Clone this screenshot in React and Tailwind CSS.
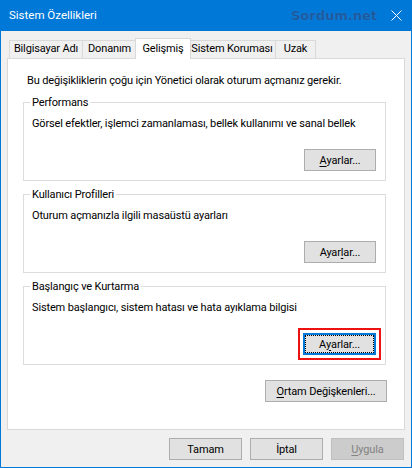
import React from 'react';

const tabs = [
  { label: 'Bilgisayar Adı', w: 'w-[74px]' },
  { label: 'Donanım', w: 'w-[55px]' },
  { label: 'Gelişmiş', w: 'w-[56px]', active: true },
  { label: 'Sistem Koruması', w: 'w-[88px]' },
  { label: 'Uzak', w: 'w-[41px]' },
];

// Mnemonic letter, underlined like a Win32 accelerator
const Key = ({ children }) => <span className="underline underline-offset-[2px]">{children}</span>;

const WinButton = ({ children, className = '', focused = false, disabled = false }) => (
  <button
    type="button"
    className={`flex items-center justify-center h-[22px] leading-none whitespace-nowrap ${
      disabled
        ? 'bg-[#cccccc] border border-[#bfbfbf] text-[#838383]'
        : focused
          ? 'bg-[#e1e1e1] border-2 border-[#0078d7] text-black'
          : 'bg-[#e1e1e1] border border-[#adadad] text-black'
    } ${className}`}
  >
    {focused ? (
      <span className="flex items-center justify-center w-full h-full border border-dotted border-black">
        {children}
      </span>
    ) : (
      children
    )}
  </button>
);

const GroupBox = ({ title, text, children }) => (
  <fieldset className="border border-[#dcdcdc] pl-[6px] pr-[10px] pb-[9px]">
    <legend className="px-[2px] h-[15px] leading-[15px]">{title}</legend>
    <p className="ml-[2px] mt-[6px] h-[15px] leading-[15px]">{text}</p>
    <div className="flex justify-end mt-[18px]">{children}</div>
  </fieldset>
);

export default function App() {
  return (
    <div
      className="w-[412px] h-[468px] flex flex-col border-x border-b border-[#0078d7] bg-[#f0f0f0] text-[11px] tracking-[-0.15px] text-black whitespace-nowrap"
      style={{ fontFamily: 'Roboto, "Liberation Sans", Arial, sans-serif' }}
    >
      {/* title bar */}
      <div className="h-[31px] shrink-0 -mx-px flex items-center bg-[#0078d7] pl-[9px] pr-[10px]">
        <span className="text-white text-[11.5px] tracking-normal">Sistem Özellikleri</span>
        <span
          className="ml-auto mr-[14px] text-[13px] tracking-normal font-bold text-[#1a5a9e] [text-shadow:0_0_1px_#3a8ae0]"
          style={{ fontFamily: '"DejaVu Sans", Verdana, sans-serif' }}
        >
          Sordum.net
        </span>
        <svg width="11" height="11" viewBox="0 0 11 11">
          <path d="M0.5 0.5 L10.5 10.5 M10.5 0.5 L0.5 10.5" stroke="#ffffff" strokeWidth="1" />
        </svg>
      </div>

      <div className="flex-1 flex flex-col pl-[6px] pr-[6px] pt-[7px]">
        {/* tab strip */}
        <div className="flex items-end h-[20px] pl-[2px] relative z-10">
          {tabs.map((t) =>
            t.active ? (
              <div
                key={t.label}
                className={`${t.w} -ml-[2px] -mr-[2px] h-[21px] -mb-px border border-b-0 border-[#d9d9d9] bg-white flex items-start justify-center pt-[2px] relative z-10`}
              >
                {t.label}
              </div>
            ) : (
              <div
                key={t.label}
                className={`${t.w} -ml-px first:ml-0 h-[18px] border border-b-0 border-[#d9d9d9] bg-[#f0f0f0] flex items-center justify-center`}
              >
                {t.label}
              </div>
            )
          )}
        </div>

        {/* tab page */}
        <div className="h-[372px] border border-[#d9d9d9] bg-white pl-[15px] pr-[18px] pt-[14px]">
          <p className="ml-[4px] h-[15px] leading-[15px]">
            Bu değişikliklerin çoğu için Yönetici olarak oturum açmanız gerekir.
          </p>

          <div className="flex flex-col gap-[6px] mt-[7px]">
            <GroupBox title="Performans" text="Görsel efektler, işlemci zamanlaması, bellek kullanımı ve sanal bellek">
              <WinButton className="w-[72px] -mr-px">
                <Key>A</Key>yarlar...
              </WinButton>
            </GroupBox>

            <GroupBox title="Kullanıcı Profilleri" text="Oturum açmanızla ilgili masaüstü ayarları">
              <WinButton className="w-[72px] -mr-px">
                Ayar<Key>l</Key>ar...
              </WinButton>
            </GroupBox>

            <GroupBox title="Başlangıç ve Kurtarma" text="Sistem başlangıcı, sistem hatası ve hata ayıklama bilgisi">
              <WinButton focused className="w-[73px] -mr-px outline-2 outline-[#ee1111] outline-offset-[3px]">
                A<Key>y</Key>arlar...
              </WinButton>
            </GroupBox>
          </div>

          <div className="flex justify-end mt-[15px]">
            <WinButton className="w-[122px] -mr-px">
              <Key>O</Key>rtam Değişkenleri...
            </WinButton>
          </div>
        </div>

        {/* dialog buttons */}
        <div className="flex justify-end gap-[8px] mt-[8px] pr-px">
          <WinButton className="w-[73px]">Tamam</WinButton>
          <WinButton className="w-[73px]">İptal</WinButton>
          <WinButton disabled className="w-[73px]">
            <Key>U</Key>ygula
          </WinButton>
        </div>
      </div>
    </div>
  );
}
